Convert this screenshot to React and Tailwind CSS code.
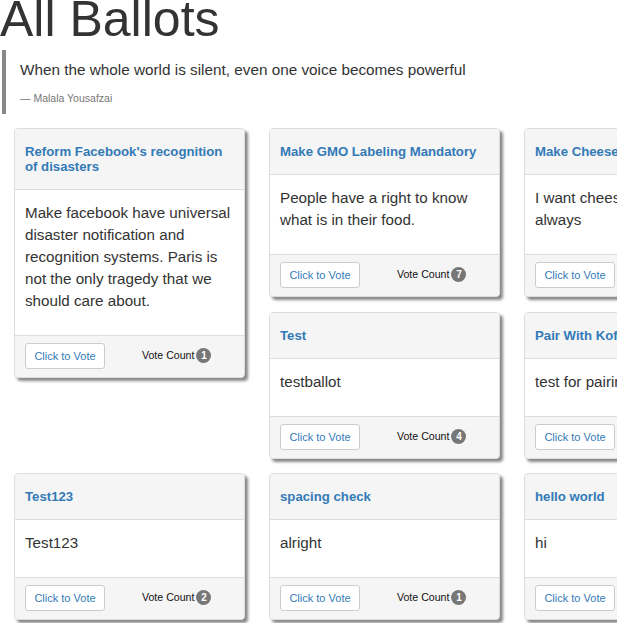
import React from "react";

const cards = [
  { title: "Reform Facebook's recognition of disasters", body: "Make facebook have universal disaster notification and recognition systems. Paris is not the only tragedy that we should care about.", count: 1, cls: "row-span-2" },
  { title: "Make GMO Labeling Mandatory", body: "People have a right to know what is in their food.", count: 7 },
  { title: "Make Cheese Free For All", body: "I want cheese on my pizza always", count: 3 },
  { title: "Test", body: "testballot", count: 4 },
  { title: "Pair With Kofi", body: "test for pairing", count: 2 },
  { title: "Test123", body: "Test123", count: 2 },
  { title: "spacing check", body: "alright", count: 1 },
  { title: "hello world", body: "hi", count: 1 },
];

function Card({ title, body, count, cls = "" }) {
  return (
    <div className={`self-start w-[231px] rounded-[4px] border border-[#dddddd] bg-white shadow-[3px_3px_3px_#888888] ${cls}`}>
      <div className="rounded-t-[3px] border-b border-[#dddddd] bg-[#f5f5f5] px-[10px] pt-[15px] pb-[15px]">
        <h3 className="text-[13.2px] leading-[15px] font-bold text-[#337ab7]">{title}</h3>
      </div>
      <div className="px-[10px] pt-[12px] pb-[23px]">
        <p className="text-[15.2px] leading-[22px] text-[#333333]">{body}</p>
      </div>
      <div className="flex items-center rounded-b-[3px] border-t border-[#dddddd] bg-[#f5f5f5] px-[10px] pt-[7px] pb-[8px]">
        <button className="h-[26px] w-[80px] rounded-[3px] border border-[#cccccc] bg-white text-[11px] leading-none text-[#337ab7]">
          Click to Vote
        </button>
        <div className="ml-[37px] flex items-center text-[10.6px] text-[#111111]">
          <span>Vote Count</span>
          <span className="ml-[2px] inline-flex h-[15px] min-w-[15px] items-center justify-center rounded-full bg-[#777777] px-[4px] text-[10px] font-bold leading-none text-white">
            {count}
          </span>
        </div>
      </div>
    </div>
  );
}

export default function App() {
  return (
    <div className="relative h-[623px] w-[617px] overflow-hidden bg-white font-['Liberation_Sans',Arial,sans-serif] text-[#333333]">
      <h1 className="mt-[-6px] ml-[0px] text-[50px] leading-[50px] font-normal text-[#333333] whitespace-nowrap">All Ballots</h1>
      <blockquote className="mt-[6px] ml-[2px] border-l-[4px] border-[#888888] pl-[14px] pt-[9px] pb-[8px]">
        <p className="text-[15.3px] leading-[22px] text-[#333333] whitespace-nowrap">When the whole world is silent, even one voice becomes powerful</p>
        <footer className="mt-[9px] text-[10.5px] leading-[16px] text-[#777777]">— Malala Yousafzai</footer>
      </blockquote>
      <div className="mt-[14px] ml-[14px] grid w-[780px] grid-cols-[231px_231px_231px] grid-rows-[168px_145px_auto] gap-x-[24px] gap-y-[16px]">
        {cards.map((c, i) => (
          <Card key={i} {...c} />
        ))}
      </div>
    </div>
  );
}
